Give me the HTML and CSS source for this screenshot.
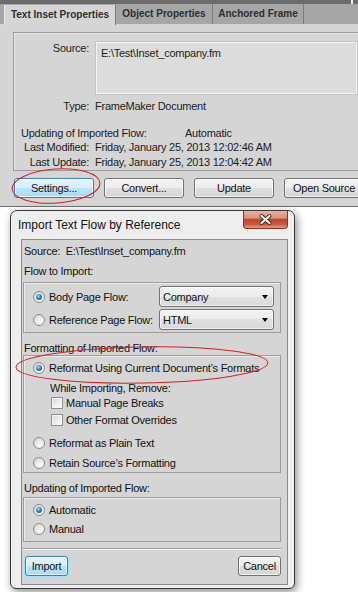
FILE: index.html
```html
<html>
<head>
<title>Text Inset Properties</title>
<link rel="stylesheet" href="styles.css">
</head>
<body>
<div class="panel">
    <div class="topband"></div>
    <div class="tabs">
        <div class="tab active">Text Inset Properties</div>
        <div class="tab t2">Object Properties</div>
        <div class="tab t3">Anchored Frame</div>
    </div>
    <div class="panel-body">
        <div class="infobox">
            <div class="row source-row">
                <div class="lbl">Source:</div>
                <div class="srcbox">E:\Test\Inset_company.fm</div>
            </div>
            <div class="row type-row">
                <div class="lbl">Type:</div>
                <div class="val">FrameMaker Document</div>
            </div>
            <div class="upd"><span class="upd-lbl">Updating of Imported Flow:</span><span>Automatic</span></div>
            <div class="row mod-row">
                <div class="lbl">Last Modified:</div>
                <div class="val">Friday, January 25, 2013 12:02:46 AM</div>
            </div>
            <div class="row last-row">
                <div class="lbl">Last Update:</div>
                <div class="val">Friday, January 25, 2013 12:04:42 AM</div>
            </div>
        </div>
        <div class="btnrow">
            <button class="btn hot">Settings...</button>
            <button class="btn">Convert...</button>
            <button class="btn">Update</button>
            <button class="btn">Open Source</button>
        </div>
    </div>
</div>

<div class="dialog">
    <div class="titlebar">
        <div class="title">Import Text Flow by Reference</div>
        <div class="close">
            <svg width="43" height="17" viewBox="0 0 43 17">
                <path d="M17.5 5 L25.5 12 M25.5 5 L17.5 12" stroke="#4a2418" stroke-width="4" stroke-linecap="round"/>
                <path d="M17.5 5 L25.5 12 M25.5 5 L17.5 12" stroke="#ffffff" stroke-width="2.2" stroke-linecap="round"/>
            </svg>
        </div>
    </div>
    <div class="client">
        <div class="line source-line">Source:&nbsp; E:\Test\Inset_company.fm</div>
        <div class="line flow-lbl">Flow to Import:</div>
        <div class="group g1">
            <div class="opt combo-row">
                <span class="radio on"></span><span class="opt-text">Body Page Flow:</span>
                <div class="combo"><span>Company</span><span class="arrow"></span></div>
            </div>
            <div class="opt combo-row">
                <span class="radio"></span><span class="opt-text">Reference Page Flow:</span>
                <div class="combo"><span>HTML</span><span class="arrow"></span></div>
            </div>
        </div>
        <div class="line sect-lbl">Formatting of Imported Flow:</div>
        <div class="group g2">
            <div class="opt r1"><span class="radio on"></span>Reformat Using Current Document’s Formats</div>
            <div class="line while">While Importing, Remove:</div>
            <div class="opt cb cb1"><span class="check"></span>Manual Page Breaks</div>
            <div class="opt cb cb2"><span class="check"></span>Other Format Overrides</div>
            <div class="opt r3"><span class="radio"></span>Reformat as Plain Text</div>
            <div class="opt r4"><span class="radio"></span>Retain Source’s Formatting</div>
        </div>
        <div class="line sect-lbl">Updating of Imported Flow:</div>
        <div class="group g3">
            <div class="opt r1"><span class="radio on"></span>Automatic</div>
            <div class="opt r2"><span class="radio"></span>Manual</div>
        </div>
        <div class="sep"></div>
        <div class="dlg-btns">
            <button class="btn small hot glow">Import</button>
            <button class="btn small">Cancel</button>
        </div>
    </div>
</div>

<svg class="marks" width="358" height="592" viewBox="0 0 358 592">
    <ellipse cx="56" cy="186" rx="44" ry="17" transform="rotate(-4 56 186)" fill="none" stroke="#d21f2a" stroke-width="1"/>
    <ellipse cx="142" cy="365" rx="126" ry="18" transform="rotate(-1 142 365)" fill="none" stroke="#d21f2a" stroke-width="1"/>
</svg>
</body>
</html>
```

FILE: styles.css
```css
*
{
    margin: 0;
    padding: 0;
}
body
{
    position: relative;
    width: 358px;
    height: 592px;
    overflow: hidden;
    background: #fff;
    font-family: "Liberation Sans", Arial, sans-serif;
    font-size: 11px;
    letter-spacing: -0.25px;
    color: #1c1c1c;
}

/* ---- properties panel ---- */
.panel
{
    width: 358px;
    height: 207px;
    box-sizing: border-box;
    overflow: hidden;
    background: #d5d5d5;
    border-bottom: 1px solid #707070;
}
.topband
{
    height: 4px;
    background: linear-gradient(to right, #6b6b6b 351px, #f2f2f2 351px, #f2f2f2 353px, #6b6b6b 353px);
}
.tabs
{
    display: flex;
    height: 20px;
    padding-left: 4px;
    background: #a6a6a6;
}
.tab
{
    box-sizing: border-box;
    height: 20px;
    line-height: 20px;
    text-align: center;
    font-size: 10px;
    font-weight: bold;
    letter-spacing: 0;
    color: #2e2e2e;
    border-right: 1px solid #7c7c7c;
}
.tab.active
{
    width: 112px;
    margin-top: 1px;
    background: #d5d5d5;
    border-left: 1px solid #ececec;
}
.tab.t2 { width: 97px; }
.tab.t3 { width: 91px; }

.panel-body
{
    padding: 8px 0 0 13px;
}
.infobox
{
    width: 350px;
    height: 139px;
    box-sizing: border-box;
    border: 1px solid #9b9b9b;
    border-right: none;
    box-shadow: inset 1px 1px 0 #e6e6e6;
}
.row
{
    display: flex;
}
.lbl
{
    width: 75px;
    text-align: right;
    flex: none;
}
.val
{
    margin-left: 6px;
}
.source-row
{
    margin-top: 9px;
    line-height: 13px;
}
.srcbox
{
    width: 261px;
    height: 52px;
    box-sizing: border-box;
    margin-left: 7px;
    padding: 3px 4px;
    line-height: 14px;
    background: #dcdcdc;
    border: 1px solid #f4f4f4;
    box-shadow: 0 0 0 1px #c4c4c4;
}
.type-row
{
    margin-top: 5px;
    height: 14px;
    line-height: 14px;
}
.upd
{
    display: flex;
    margin-top: 14px;
    padding-left: 7px;
    height: 13px;
    line-height: 13px;
}
.upd-lbl
{
    width: 164px;
}
.mod-row
{
    height: 15px;
    line-height: 15px;
}
.last-row
{
    height: 14px;
    line-height: 14px;
}

/* ---- buttons ---- */
.btnrow
{
    display: flex;
    gap: 10px;
    margin: 7px 0 0 1px;
}
.btn
{
    flex: none;
    width: 80px;
    height: 20px;
    box-sizing: border-box;
    border: 1px solid #707070;
    border-radius: 3px;
    background: linear-gradient(#f4f4f4 0%, #ececec 50%, #e0e0e0 50%, #d4d4d4 100%);
    box-shadow: inset 0 0 0 1px rgba(255,255,255,0.7);
    font-family: "Liberation Sans", Arial, sans-serif;
    font-size: 11px;
    letter-spacing: -0.25px;
    color: #111;
}
.btn.hot
{
    border-color: #3c7fb1;
    background: linear-gradient(#e6f4fc 0%, #d6eefb 50%, #bde4fa 50%, #a9d9f3 100%);
}
.btn.small
{
    width: 43px;
}
.btn.glow
{
    box-shadow: inset 0 0 0 1px rgba(255,255,255,0.6), 0 0 0 1px #a4e0fb;
}

/* ---- dialog ---- */
.dialog
{
    display: flex;
    flex-direction: column;
    width: 285px;
    height: 379px;
    box-sizing: border-box;
    margin: 3px 0 0 10px;
    border: 1px solid #3a3a3a;
    border-radius: 7px 7px 6px 6px;
    background: #eeeeee;
    box-shadow: 2px 3px 9px rgba(0,0,0,0.45);
}
.titlebar
{
    display: flex;
    justify-content: space-between;
    height: 28px;
    padding: 0 6px 0 7px;
    flex: none;
}
.title
{
    align-self: center;
    font-size: 12px;
    letter-spacing: 0;
    color: #111;
}
.close
{
    width: 45px;
    height: 18px;
    box-sizing: border-box;
    border: 1px solid #8a3322;
    border-top: none;
    border-radius: 0 0 4px 4px;
    background: linear-gradient(#eab0a2 0%, #dc8e7c 42%, #c4432c 50%, #c75b42 78%, #e39a86 100%);
}
.close svg
{
    display: block;
}
.client
{
    flex: 1;
    margin: 0 6px 3px 10px;
    padding: 0 6px 0 1px;
    border: 1px solid #8b8b8b;
    background: #d5d5d5;
    color: #111;
}
.line
{
    height: 14px;
    line-height: 14px;
    padding-left: 1px;
}
.source-line { margin-top: 4px; }
.flow-lbl { margin-top: 6px; }
.sect-lbl { margin-top: 8px; }

.group
{
    border: 1px solid #9c9c9c;
    box-shadow: inset 1px 1px 0 #ececec;
    padding-left: 9px;
}
.g1
{
    margin-top: 4px;
    height: 51px;
    box-sizing: border-box;
    padding-top: 3px;
    padding-right: 6px;
}
.g2
{
    padding-bottom: 1px;
}
.g3
{
    margin-top: 2px;
    padding-bottom: 4px;
}
.opt
{
    display: flex;
    align-items: center;
    height: 16px;
}
.combo-row
{
    height: 21px;
}
.combo-row + .combo-row
{
    margin-top: 2px;
}
.opt-text
{
    flex: 1;
}
.g2 .r1 { margin-top: 4px; }
.g2 .while { margin-top: 5px; padding-left: 17px; }
.g2 .cb { padding-left: 18px; }
.g2 .cb2 { margin-top: 1px; }
.g2 .r3 { margin-top: 7px; }
.g2 .r4 { margin-top: 4px; }
.g3 .r1 { margin-top: 4px; }
.g3 .r2 { margin-top: 3px; }

.radio
{
    display: flex;
    align-items: center;
    justify-content: center;
    flex: none;
    width: 12px;
    height: 12px;
    box-sizing: border-box;
    margin-right: 4px;
    border: 1px solid #8e8f8f;
    border-radius: 50%;
    background: radial-gradient(circle at 65% 70%, #fdfdfd 0%, #e4e4e4 55%, #cdcdcd 100%);
}
.radio.on::after
{
    content: "";
    width: 6px;
    height: 6px;
    border-radius: 50%;
    background: radial-gradient(circle at 40% 35%, #9fe4ff 0%, #2f86c0 45%, #0e3f69 100%);
}
.check
{
    flex: none;
    width: 12px;
    height: 12px;
    box-sizing: border-box;
    margin-right: 3px;
    border: 1px solid #8e8f8f;
    background: linear-gradient(135deg, #d8d8d8 0%, #f0f0f0 60%, #fdfdfd 100%);
    box-shadow: inset 0 0 0 1px #f6f6f6;
}
.combo
{
    display: flex;
    align-items: center;
    justify-content: space-between;
    width: 115px;
    height: 21px;
    box-sizing: border-box;
    padding: 0 5px 0 3px;
    border: 1px solid #727272;
    border-radius: 3px;
    background: linear-gradient(#f3f3f3 0%, #ebebeb 50%, #e0e0e0 50%, #d9d9d9 100%);
    box-shadow: inset 0 0 0 1px rgba(255,255,255,0.6);
}
.arrow
{
    width: 0;
    height: 0;
    border-left: 3.5px solid transparent;
    border-right: 3.5px solid transparent;
    border-top: 4px solid #000;
}
.sep
{
    margin-top: 6px;
    height: 1px;
    border-top: 1px solid #a0a0a0;
    background: #f4f4f4;
}
.dlg-btns
{
    display: flex;
    justify-content: space-between;
    margin-top: 6px;
    padding-left: 2px;
}

/* ---- annotation marks ---- */
.marks
{
    position: absolute;
    top: 0;
    left: 0;
    pointer-events: none;
}
```
